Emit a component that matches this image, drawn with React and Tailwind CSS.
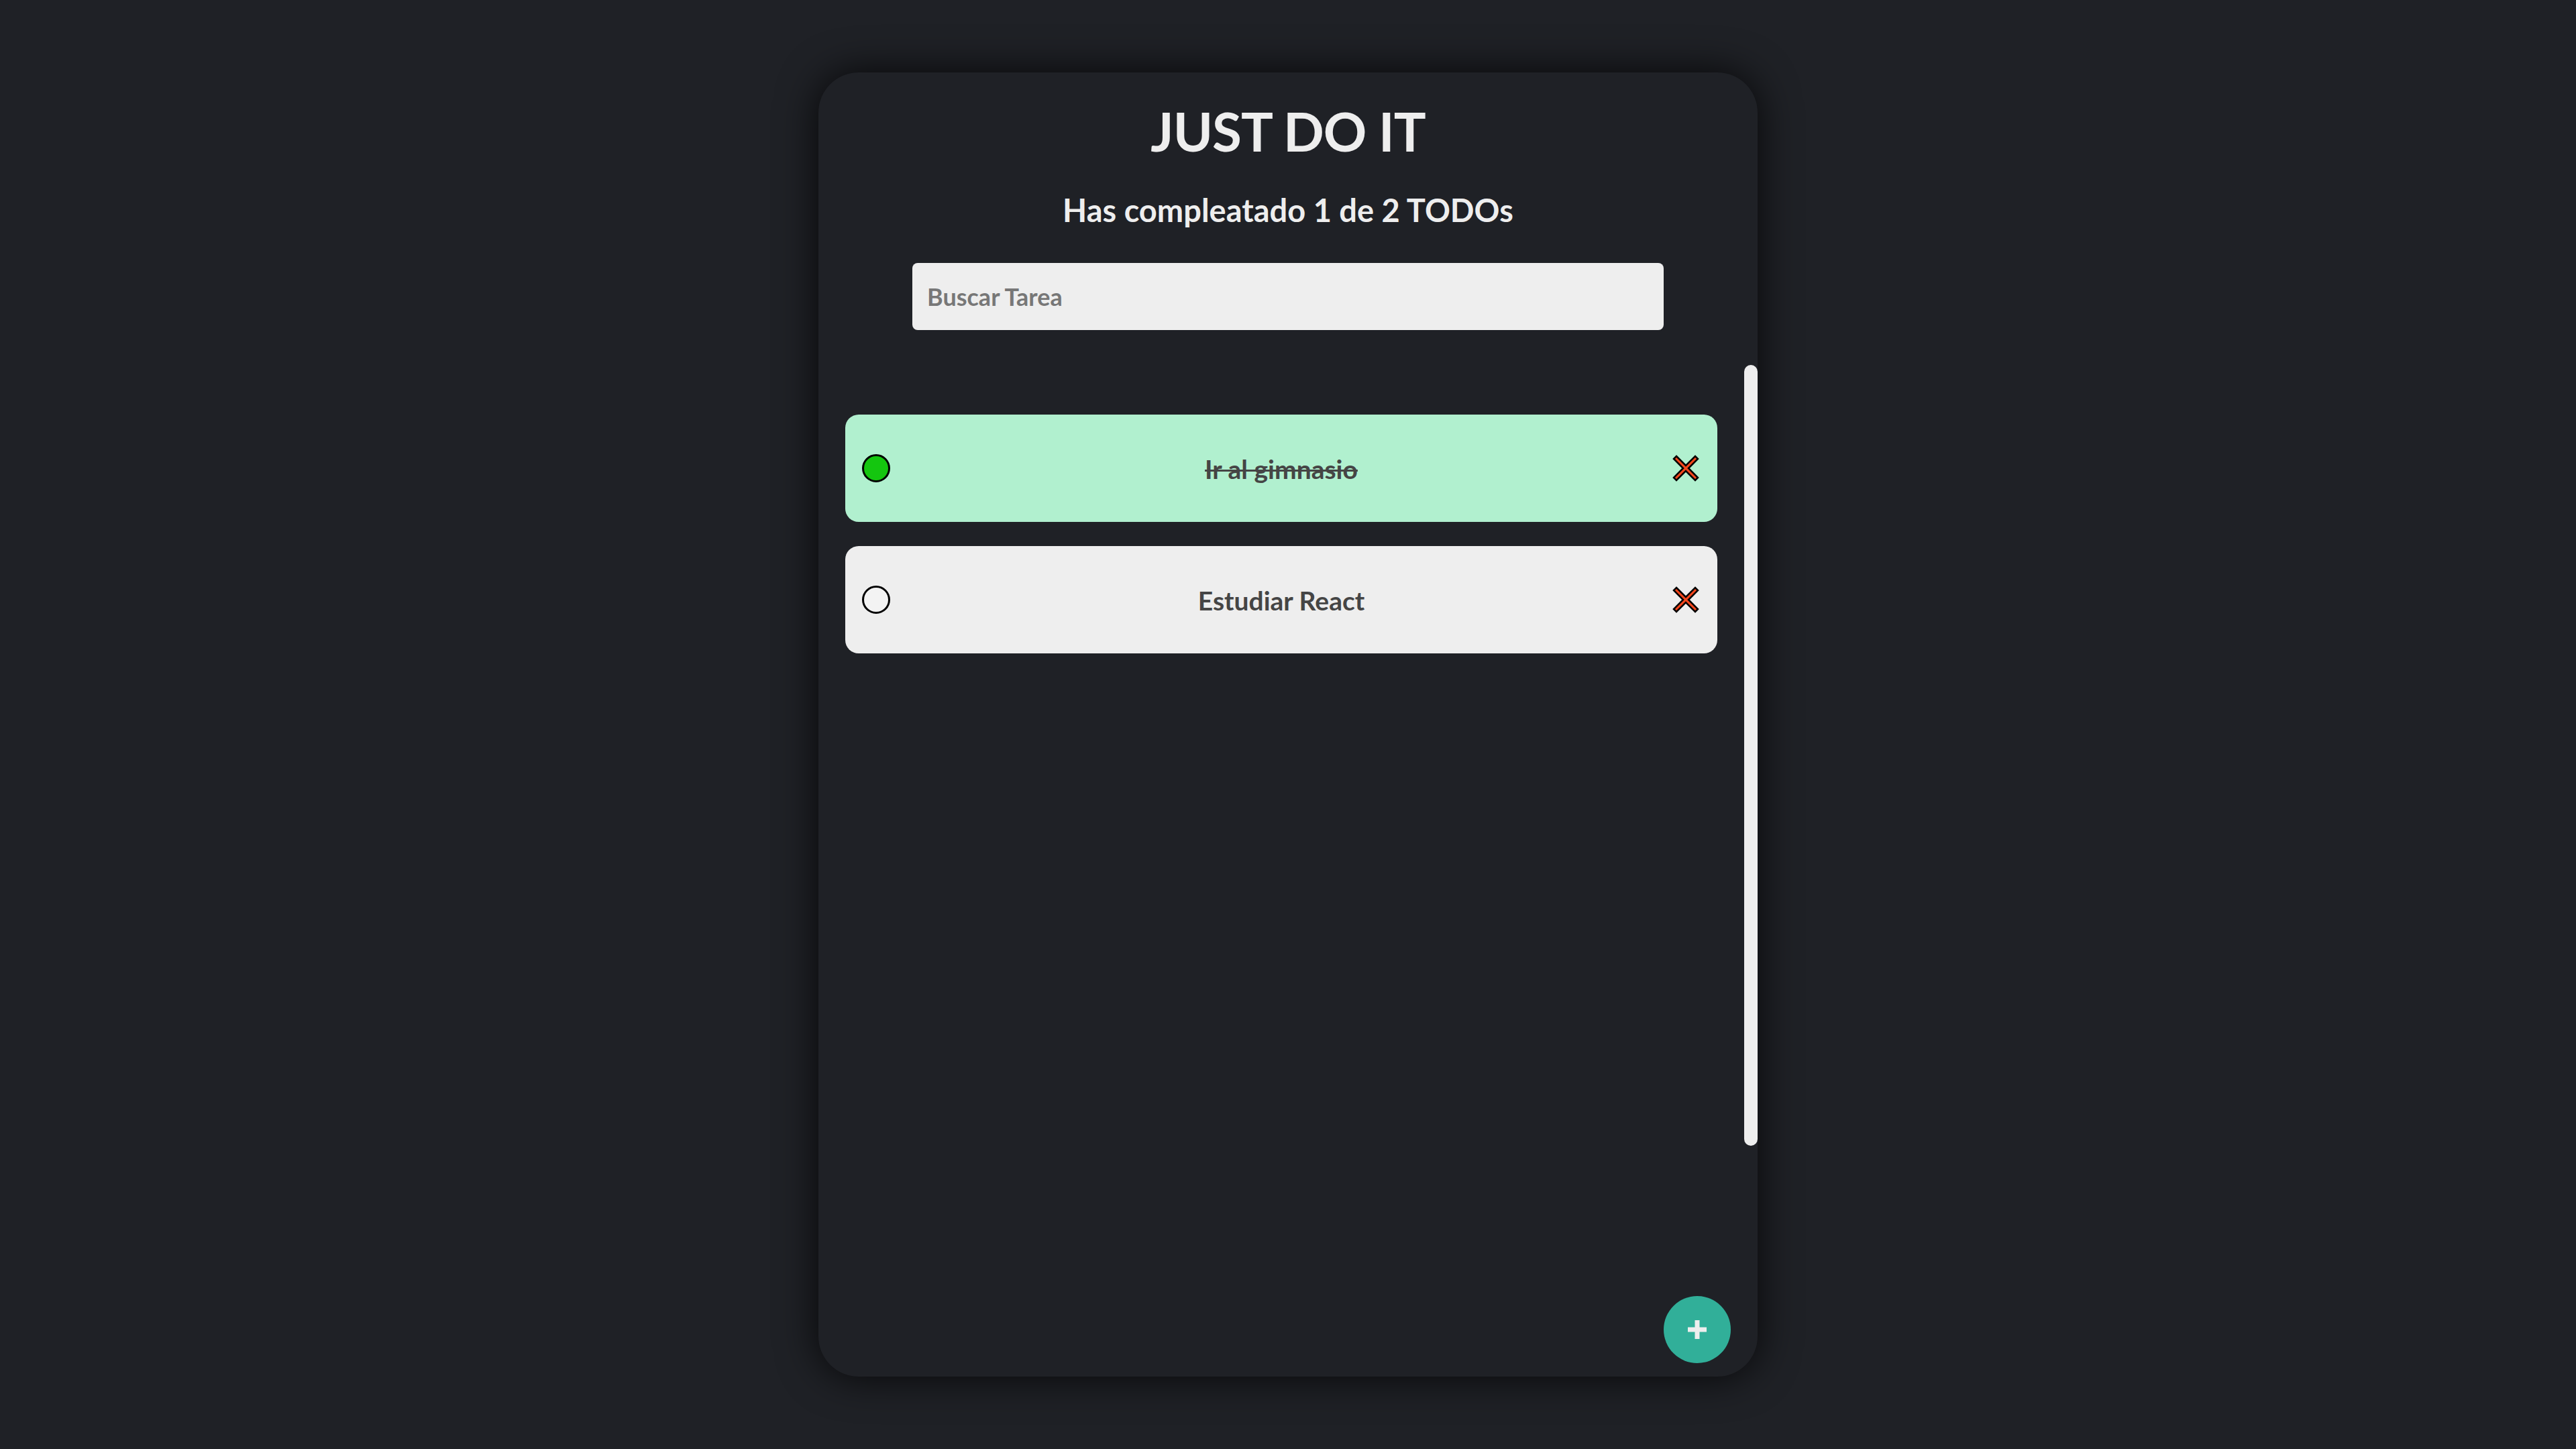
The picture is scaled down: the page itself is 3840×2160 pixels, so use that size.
// Lista de TODOs: tarjeta centrada con buscador, tareas y boton flotante para agregar
const TODOS = [
  { texto: 'Ir al gimnasio', completado: true },
  { texto: 'Estudiar React', completado: false },
]

function IconoBorrar() {
  return (
    <svg width="40" height="40" viewBox="0 0 40 40">
      <polygon
        points="6,2 20,16 34,2 38,6 24,20 38,34 34,38 20,24 6,38 2,34 16,20 2,6"
        fill="#f4461c"
        stroke="#000"
        strokeWidth="2.5"
        strokeLinejoin="miter"
      />
    </svg>
  )
}

function TodoItem({ texto, completado }) {
  return (
    <li className={`h-[160px] rounded-[20px] flex items-center pl-[25px] pr-[27px] ${completado ? 'bg-[#b1f0cf]' : 'bg-[#eeeeee]'}`}>
      <span className={`w-[42px] h-[42px] rounded-full border-[3px] border-black shrink-0 ${completado ? 'bg-[#14c60f]' : 'bg-[#f3f3f3]'}`} />
      <p className={`flex-1 pt-[3px] text-center text-[39px] font-bold text-[#454545] ${completado ? 'line-through decoration-[3px]' : ''}`}>{texto}</p>
      <button className="shrink-0 w-10 h-10 flex items-center justify-center"><IconoBorrar /></button>
    </li>
  )
}

export default function App() {
  const completados = TODOS.filter(t => t.completado).length

  return (
    <div className="w-full h-screen bg-[#1f2126] flex items-center justify-center" style={{ fontFamily: 'Lato, "Open Sans", sans-serif' }}>
      <div className="relative w-[1400px] h-[1944px] bg-[#1f2126] rounded-[60px] shadow-[0_0_60px_rgba(0,0,0,0.8)] flex flex-col">
        <h1 className="pt-[47px] text-center text-[80px] leading-none font-bold tracking-[-1px] text-[#eeeeee]">JUST DO IT</h1>
        <h2 className="mt-[55px] text-center text-[47px] leading-none font-bold text-[#eeeeee]">
          Has compleatado {completados} de {TODOS.length} TODOs
        </h2>
        <input
          placeholder="Buscar Tarea"
          className="mt-[55px] mx-auto w-[1120px] h-[100px] rounded-lg bg-[#eeeeee] px-[22px] text-[36px] font-bold text-[#444] placeholder:text-[#777777] outline-none"
        />

        <div className="mt-[52px] h-[1164px] flex">
          <ul className="flex-1 px-10 pt-[74px] flex flex-col gap-[36px]">
            {TODOS.map(t => <TodoItem key={t.texto} {...t} />)}
          </ul>
          <div className="w-5 h-full rounded-full bg-[#eeeeee]" />
        </div>

        <button className="absolute bottom-5 right-10 w-[100px] h-[100px] rounded-full bg-[#31af99] flex items-center justify-center">
          <svg width="28" height="28" viewBox="0 0 28 28">
            <rect x="10.5" y="0" width="7" height="28" fill="#eeeeee" />
            <rect x="0" y="10.5" width="28" height="7" fill="#eeeeee" />
          </svg>
        </button>
      </div>
    </div>
  )
}
